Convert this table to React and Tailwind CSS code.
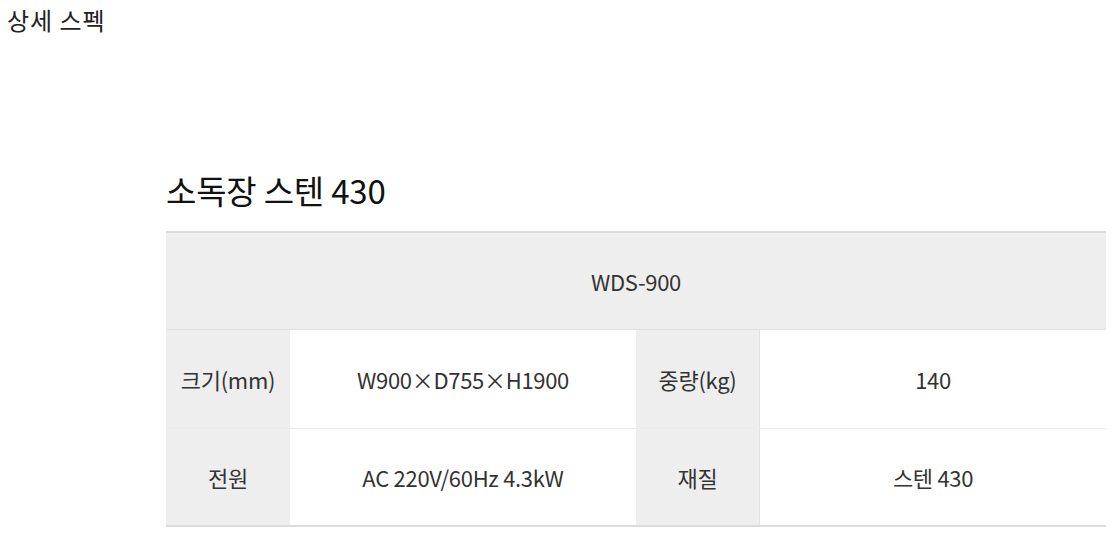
import React from 'react';

const FONT = { fontFamily: '"Noto Sans CJK KR", "Noto Sans", sans-serif' };

const rows = [
  [
    { label: '크기(mm)', value: 'W900×D755×H1900' },
    { label: '중량(kg)', value: '140' },
  ],
  [
    { label: '전원', value: 'AC 220V/60Hz 4.3kW' },
    { label: '재질', value: '스텐 430' },
  ],
];

const App = () => {
  return (
    <div className="w-[1113px] h-[541px] bg-white text-[#222] overflow-hidden" style={FONT}>
      <p className="pt-[4px] pl-[7px] text-[24px] leading-[32px] tracking-[1px]">상세 스펙</p>

      <div className="ml-[166px] mt-[131px] w-[940px]">
        <h2 className="text-[33px] leading-[46px] tracking-[-0.2px] text-[#111]">소독장 스텐 430</h2>

        {/* Spec table */}
        <div className="mt-[18px] border-t-2 border-[#dcdcdc] text-[#333] text-[22px] tracking-[-0.3px]">
          <div className="h-[97px] bg-[#eeeeee] border-b border-[#e2e2e2] flex items-center justify-center">
            WDS-900
          </div>
          {rows.map((row, i) => (
            <div
              key={i}
              className={
                i === rows.length - 1
                  ? 'grid grid-cols-[124px_346px_124px_346px] h-[98px] border-b-2 border-[#dcdcdc]'
                  : 'grid grid-cols-[124px_346px_124px_346px] h-[99px] border-b border-[#ebebeb]'
              }
            >
              <div className="bg-[#eeeeee] flex items-center justify-center">{row[0].label}</div>
              <div className="flex items-center justify-center">{row[0].value}</div>
              <div className="bg-[#eeeeee] border-r border-[#e2e2e2] flex items-center justify-center">{row[1].label}</div>
              <div className="flex items-center justify-center">{row[1].value}</div>
            </div>
          ))}
        </div>
      </div>
    </div>
  );
};

export default App;
